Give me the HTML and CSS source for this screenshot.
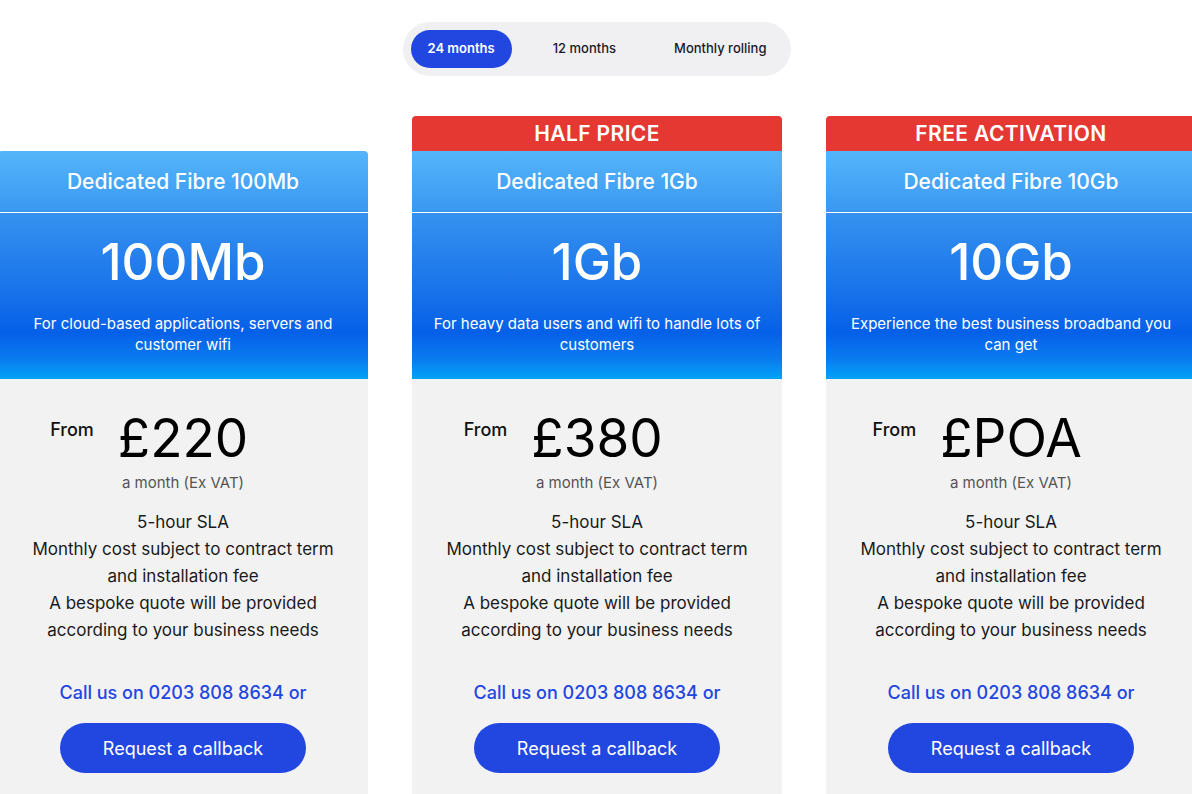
FILE: index.html
```html
<!DOCTYPE html>
<html lang="en">
<head>
<meta charset="utf-8">
<title>Dedicated Fibre pricing</title>
<link rel="stylesheet" href="styles.css">
</head>
<body>
<div class="page">
  <div class="toggle-wrap">
    <div class="toggle">
      <span class="opt active">24 months</span>
      <span class="opt">12 months</span>
      <span class="opt">Monthly rolling</span>
    </div>
  </div>
  <div class="cards">
    <div class="card">
      <div class="banner empty"></div>
      <div class="title">Dedicated Fibre 100Mb</div>
      <div class="hero">
        <div class="speed">100Mb</div>
        <p class="desc">For cloud-based applications, servers and customer wifi</p>
      </div>
      <div class="body">
        <div class="price-row">
          <span class="from">From</span>
          <div class="price-block">
            <div class="price">£220</div>
            <div class="per">a month (Ex VAT)</div>
          </div>
        </div>
        <ul class="features">
          <li>5-hour SLA</li>
          <li>Monthly cost subject to contract term and installation fee</li>
          <li>A bespoke quote will be provided according to your business needs</li>
        </ul>
        <p class="call">Call us on 0203 808 8634 or</p>
        <button class="btn">Request a callback</button>
      </div>
    </div>
    <div class="card">
      <div class="banner">HALF PRICE</div>
      <div class="title">Dedicated Fibre 1Gb</div>
      <div class="hero">
        <div class="speed">1Gb</div>
        <p class="desc">For heavy data users and wifi to handle lots of customers</p>
      </div>
      <div class="body">
        <div class="price-row">
          <span class="from">From</span>
          <div class="price-block">
            <div class="price">£380</div>
            <div class="per">a month (Ex VAT)</div>
          </div>
        </div>
        <ul class="features">
          <li>5-hour SLA</li>
          <li>Monthly cost subject to contract term and installation fee</li>
          <li>A bespoke quote will be provided according to your business needs</li>
        </ul>
        <p class="call">Call us on 0203 808 8634 or</p>
        <button class="btn">Request a callback</button>
      </div>
    </div>
    <div class="card">
      <div class="banner">FREE ACTIVATION</div>
      <div class="title">Dedicated Fibre 10Gb</div>
      <div class="hero">
        <div class="speed">10Gb</div>
        <p class="desc">Experience the best business broadband you can get</p>
      </div>
      <div class="body">
        <div class="price-row">
          <span class="from">From</span>
          <div class="price-block">
            <div class="price">£POA</div>
            <div class="per">a month (Ex VAT)</div>
          </div>
        </div>
        <ul class="features">
          <li>5-hour SLA</li>
          <li>Monthly cost subject to contract term and installation fee</li>
          <li>A bespoke quote will be provided according to your business needs</li>
        </ul>
        <p class="call">Call us on 0203 808 8634 or</p>
        <button class="btn">Request a callback</button>
      </div>
    </div>
  </div>
</div>
</body>
</html>
```
FILE: styles.css
```css
html, body {
  margin: 0;
  padding: 0;
  background: #ffffff;
  overflow: hidden;
}
body {
  font-family: "Inter", "Noto Sans", sans-serif;
  color: #111;
}
.page {
  width: 1198px;
  margin-left: -2px;
}
.toggle-wrap {
  display: flex;
  justify-content: center;
  padding-top: 22px;
}
.toggle {
  display: flex;
  gap: 24px;
  padding: 8px;
  background: #f0f0f2;
  border-radius: 27px;
}
.opt {
  display: flex;
  align-items: center;
  height: 38px;
  padding: 0 17px 2px;
  box-sizing: border-box;
  font-size: 13px;
  font-weight: 500;
  color: #1a1a2a;
  border-radius: 19px;
}
.opt.active {
  background: #2147e0;
  color: #fff;
  font-weight: 600;
}
.cards {
  display: flex;
  gap: 44px;
  margin-top: 40px;
}
.card {
  width: 370px;
  display: flex;
  flex-direction: column;
}
.banner {
  height: 35px;
  background: #e53832;
  color: #fff;
  font-size: 21px;
  font-weight: 600;
  letter-spacing: 0.4px;
  display: flex;
  align-items: center;
  justify-content: center;
  border-radius: 4px 4px 0 0;
}
.banner.empty {
  visibility: hidden;
}
.title {
  height: 62px;
  display: flex;
  align-items: center;
  justify-content: center;
  padding-bottom: 1px;
  box-sizing: border-box;
  color: #fff;
  font-size: 21px;
  font-weight: 500;
  background: linear-gradient(#54b5fa, #3a98f1);
  border-bottom: 1px solid #fff;
}
.card:first-child .title {
  border-radius: 4px 4px 0 0;
}
.hero {
  height: 166px;
  box-sizing: border-box;
  padding-top: 20px;
  text-align: center;
  color: #fff;
  background: linear-gradient(#3592ef 0%, #1a74ea 45%, #0560e8 72%, #0a7bef 88%, #00a3f8 100%);
}
.speed {
  font-size: 51px;
  font-weight: 500;
  line-height: 58px;
}
.desc {
  margin: 22px 18px 0;
  font-size: 15px;
  line-height: 21px;
}
.body {
  background: #f2f2f2;
  text-align: center;
  padding: 30px 0 40px;
}
.price-row {
  display: grid;
  grid-template-columns: 1fr auto 1fr;
  align-items: start;
}
.from {
  justify-self: end;
  margin-right: 24px;
  margin-top: 10px;
  font-size: 18px;
  font-weight: 500;
  color: #111;
}
.price {
  font-size: 53px;
  font-weight: 400;
  line-height: 58px;
  color: #000;
}
.per {
  margin-top: 6px;
  font-size: 15px;
  color: #555;
}
.features {
  list-style: none;
  margin: 17px 0 0;
  padding: 0 30px;
  font-size: 17px;
  line-height: 27px;
  color: #1a1a1a;
}
.call {
  margin: 38px 0 0;
  font-size: 18px;
  font-weight: 500;
  color: #2246e0;
}
.btn {
  margin-top: 20px;
  width: 246px;
  height: 50px;
  border: none;
  border-radius: 25px;
  background: #2147e0;
  color: #fff;
  font-family: inherit;
  font-size: 18px;
}
```
